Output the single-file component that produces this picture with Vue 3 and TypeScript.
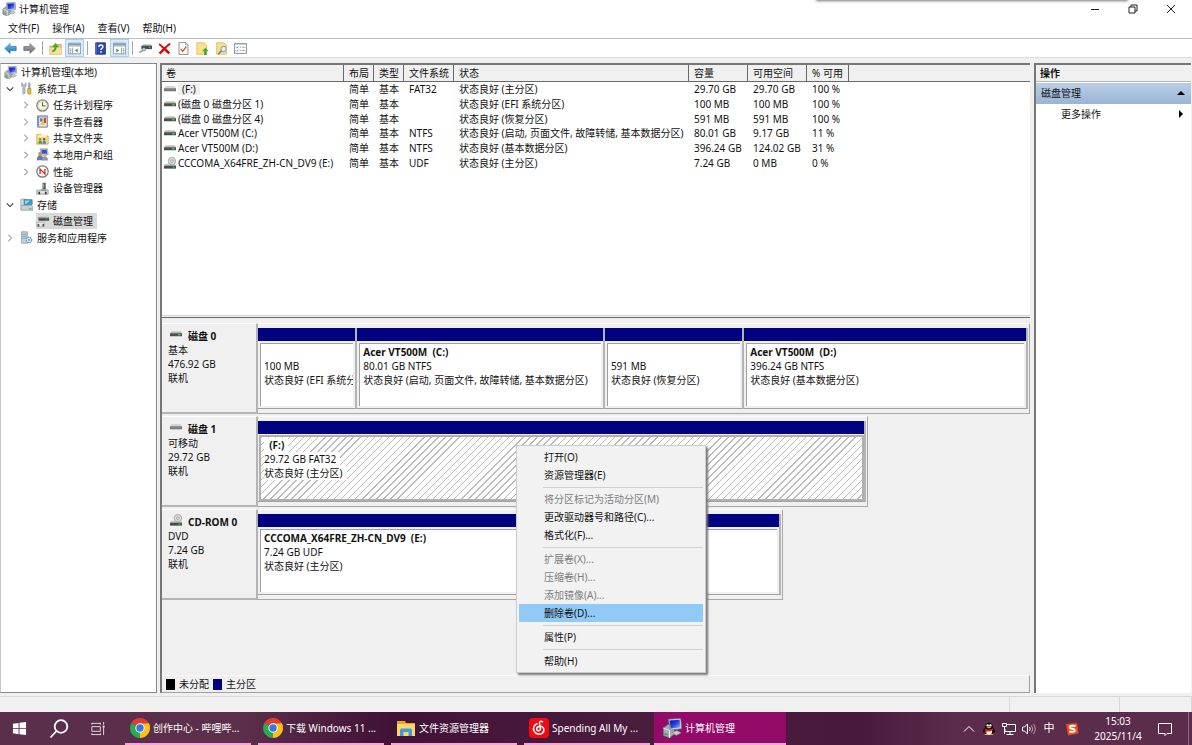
<script setup lang="ts">
import { ref } from 'vue'

interface TreeNode {
  label: string
  icon: string
  level: number
  state?: 'open' | 'closed'
  selected?: boolean
}
interface Volume {
  icon: string
  cells: string[]
  marked?: boolean
}
interface Partition {
  title: string
  size: string
  status: string
  share: number
  selected?: boolean
}
interface Disk {
  name: string
  icon: string
  kind: string
  size: string
  state: string
  width: number
  parts: Partition[]
}
interface MenuEntry {
  label: string
  disabled?: boolean
  rule?: boolean
}

const menus = ['文件(F)', '操作(A)', '查看(V)', '帮助(H)']

const tools: { icon: string; name: string; on?: boolean }[][] = [
  [{ icon: 'back', name: '后退' }, { icon: 'forward', name: '前进' }],
  [{ icon: 'up', name: '向上一级' }, { icon: 'panel-left', name: '显示/隐藏控制台树', on: true }],
  [{ icon: 'help', name: '帮助' }, { icon: 'panel-right', name: '显示/隐藏操作窗格', on: true }],
  [
    { icon: 'refresh-disk', name: '刷新' },
    { icon: 'delete', name: '删除' },
    { icon: 'check', name: '属性' },
    { icon: 'page-up', name: '打开' },
    { icon: 'page-find', name: '浏览' },
    { icon: 'options', name: '设置' },
  ],
]

const tree: TreeNode[] = [
  { label: '计算机管理(本地)', icon: 'computer', level: 0 },
  { label: '系统工具', icon: 'tools', level: 1, state: 'open' },
  { label: '任务计划程序', icon: 'clock', level: 2, state: 'closed' },
  { label: '事件查看器', icon: 'events', level: 2, state: 'closed' },
  { label: '共享文件夹', icon: 'shared', level: 2, state: 'closed' },
  { label: '本地用户和组', icon: 'users', level: 2, state: 'closed' },
  { label: '性能', icon: 'perf', level: 2, state: 'closed' },
  { label: '设备管理器', icon: 'device', level: 2 },
  { label: '存储', icon: 'storage', level: 1, state: 'open' },
  { label: '磁盘管理', icon: 'diskmgmt', level: 2, selected: true },
  { label: '服务和应用程序', icon: 'services', level: 1, state: 'closed' },
]

const columns = ['卷', '布局', '类型', '文件系统', '状态', '容量', '可用空间', '% 可用']

const volumes: Volume[] = [
  { icon: 'drive-gray', marked: true, cells: ['(F:)', '简单', '基本', 'FAT32', '状态良好 (主分区)', '29.70 GB', '29.70 GB', '100 %'] },
  { icon: 'drive', cells: ['(磁盘 0 磁盘分区 1)', '简单', '基本', '', '状态良好 (EFI 系统分区)', '100 MB', '100 MB', '100 %'] },
  { icon: 'drive', cells: ['(磁盘 0 磁盘分区 4)', '简单', '基本', '', '状态良好 (恢复分区)', '591 MB', '591 MB', '100 %'] },
  { icon: 'drive', cells: ['Acer VT500M (C:)', '简单', '基本', 'NTFS', '状态良好 (启动, 页面文件, 故障转储, 基本数据分区)', '80.01 GB', '9.17 GB', '11 %'] },
  { icon: 'drive', cells: ['Acer VT500M (D:)', '简单', '基本', 'NTFS', '状态良好 (基本数据分区)', '396.24 GB', '124.02 GB', '31 %'] },
  { icon: 'cdrom', cells: ['CCCOMA_X64FRE_ZH-CN_DV9 (E:)', '简单', '基本', 'UDF', '状态良好 (主分区)', '7.24 GB', '0 MB', '0 %'] },
]

const disks: Disk[] = [
  {
    name: '磁盘 0', icon: 'drive', kind: '基本', size: '476.92 GB', state: '联机', width: 100,
    parts: [
      { title: '', size: '100 MB', status: '状态良好 (EFI 系统分区)', share: 99 },
      { title: 'Acer VT500M  (C:)', size: '80.01 GB NTFS', status: '状态良好 (启动, 页面文件, 故障转储, 基本数据分区)', share: 247 },
      { title: '', size: '591 MB', status: '状态良好 (恢复分区)', share: 139 },
      { title: 'Acer VT500M  (D:)', size: '396.24 GB NTFS', status: '状态良好 (基本数据分区)', share: 283 },
    ],
  },
  {
    name: '磁盘 1', icon: 'drive-gray', kind: '可移动', size: '29.72 GB', state: '联机', width: 79,
    parts: [{ title: '  (F:)', size: '29.72 GB FAT32', status: '状态良好 (主分区)', share: 1, selected: true }],
  },
  {
    name: 'CD-ROM 0', icon: 'cdrom', kind: 'DVD', size: '7.24 GB', state: '联机', width: 68,
    parts: [{ title: 'CCCOMA_X64FRE_ZH-CN_DV9  (E:)', size: '7.24 GB UDF', status: '状态良好 (主分区)', share: 1 }],
  },
]

const contextMenu: MenuEntry[] = [
  { label: '打开(O)' },
  { label: '资源管理器(E)' },
  { label: '将分区标记为活动分区(M)', disabled: true, rule: true },
  { label: '更改驱动器号和路径(C)...' },
  { label: '格式化(F)...' },
  { label: '扩展卷(X)...', disabled: true, rule: true },
  { label: '压缩卷(H)...', disabled: true },
  { label: '添加镜像(A)...', disabled: true },
  { label: '删除卷(D)...' },
  { label: '属性(P)', rule: true },
  { label: '帮助(H)', rule: true },
]
const hovered = ref('删除卷(D)...')

const tasks = [
  { label: '创作中心 - 哔哩哔...', icon: 'chrome' },
  { label: '下载 Windows 11 ...', icon: 'chrome' },
  { label: '文件资源管理器', icon: 'explorer' },
  { label: 'Spending All My ...', icon: 'music' },
  { label: '计算机管理', icon: 'computer', active: true },
]
</script>

<template>
  <svg class="defs" width="0" height="0" aria-hidden="true">
    <defs>
      <linearGradient id="g-blue" x1="0" y1="0" x2="0" y2="1"><stop offset="0" stop-color="#6cc5f0" /><stop offset="1" stop-color="#1176bd" /></linearGradient>
      <linearGradient id="g-gray" x1="0" y1="0" x2="0" y2="1"><stop offset="0" stop-color="#b0b0b0" /><stop offset="1" stop-color="#6b6b6b" /></linearGradient>
      <linearGradient id="g-screen" x1="0" y1="0" x2="1" y2="1"><stop offset="0" stop-color="#0715a8" /><stop offset=".5" stop-color="#2340e0" /><stop offset="1" stop-color="#a8c4ff" /></linearGradient>
      <linearGradient id="g-drive" x1="0" y1="0" x2="0" y2="1"><stop offset="0" stop-color="#e2e2e2" /><stop offset="1" stop-color="#a2a2a2" /></linearGradient>
    </defs>
    <symbol id="computer" viewBox="0 0 16 16">
      <path d="M1 8 5 5l5 2v6l-4 3-5-2z" fill="#a4aab0" stroke="#5d6268" stroke-width=".6" />
      <path d="M1 8l5 2v6M6 10l4-3" fill="none" stroke="#e8e8e8" stroke-width=".8" />
      <path d="M5 1l10-.6 .8 8.200-9 1z" fill="#d5dbe2" stroke="#6d737c" stroke-width=".6" />
      <path d="M6 1.900l8-.5.8 6.200-7.800.8z" fill="url(#g-screen)" />
      <path d="M8 11.500l4-1.500 3.400 1.800-4 2.200z" fill="#c9cdd2" stroke="#777" stroke-width=".5" />
      <path d="M2 12.500l2.500 1" stroke="#39a23d" />
    </symbol>
    <symbol id="back" viewBox="0 0 16 16"><path d="M1 8l6.500-6v3.500H15v5H7.500V14z" fill="url(#g-blue)" stroke="#1d6fa9" stroke-width=".8" /></symbol>
    <symbol id="forward" viewBox="0 0 16 16"><path d="M15 8L8.500 2v3.500H1v5h7.500V14z" fill="url(#g-gray)" stroke="#666" stroke-width=".8" /></symbol>
    <symbol id="up" viewBox="0 0 16 16">
      <path d="M1 5h5l1-2h8v12H1z" fill="#eac66a" stroke="#b48d32" stroke-width=".7" /><path d="M1 7h14v8H1z" fill="#f8df95" />
      <path d="M4 12c3 0 5-2 5-6h2.500L8 1.500 4.500 6H7c0 3-1 4-3 4.500z" fill="#42b52d" stroke="#2c871d" stroke-width=".5" />
    </symbol>
    <symbol id="panel-left" viewBox="0 0 16 16">
      <path d="M.5 1.500h15v13H.5z" fill="#fff" stroke="#7d8790" /><path d="M1 2h14v2.500H1z" fill="#8e9aa5" /><path d="M1 5h14v1H1z" fill="#c7ced4" />
      <path d="M5.500 7v8" stroke="#8e9aa5" /><path d="M2 8.500h2M2 10.500h2M2 12.500h2" stroke="#6c7882" /><path d="M12 8v5l-3.500-2.500z" fill="#32a532" />
    </symbol>
    <symbol id="panel-right" viewBox="0 0 16 16">
      <path d="M.5 1.500h15v13H.5z" fill="#fff" stroke="#7d8790" /><path d="M1 2h14v2.500H1z" fill="#8e9aa5" /><path d="M1 5h14v1H1z" fill="#c7ced4" />
      <path d="M10.500 7v8" stroke="#8e9aa5" /><path d="M12 8.500h2M12 10.500h2M12 12.500h2" stroke="#6c7882" /><path d="M4 8v5l3.500-2.500z" fill="#32a532" />
    </symbol>
    <symbol id="help" viewBox="0 0 16 16">
      <path d="M2 1h12v14H2z" fill="#2c49b5" stroke="#15266d" /><path d="M2.500 1v14" stroke="#8090d4" />
      <path d="M6 6c0-3 5-3 5-.3 0 1.800-2.500 2-2.500 4" fill="none" stroke="#fff" stroke-width="1.700" /><circle cx="8.500" cy="12.200" r="1.100" fill="#fff" />
    </symbol>
    <symbol id="refresh-disk" viewBox="0 0 16 16">
      <path d="M3 5l2-2h10l1 2v4H3z" fill="#97a3a2" /><path d="M3 5h13v3.500H3z" fill="#3f4b49" /><path d="M12 6.500h2" stroke="#3ee27a" stroke-width="1.300" />
      <path d="M0 13l5-3" stroke="#999" stroke-width="1.800" /><circle cx="6" cy="9" r="2" fill="#bfe0ea" stroke="#6b7c82" />
    </symbol>
    <symbol id="delete" viewBox="0 0 16 16"><path d="M2 1.500Q6 5 8 6.500 11 3 14.500 1L15.500 3Q12 5.500 10 8q3 3 5 5l-2 2q-3-2-5-4.500Q5.500 13 3 15.300L.8 13Q4 10.500 5.800 8 3 5.500.8 3.500z" fill="#d40d0d" /></symbol>
    <symbol id="check" viewBox="0 0 16 16"><path d="M2.500.5h8l3 3v12h-11z" fill="#fff" stroke="#777" /><path d="M10.500.5v3h3" fill="none" stroke="#999" /><path d="M4.500 8.500l2.500 3 4.500-6" fill="none" stroke="#e2582f" stroke-width="1.700" /></symbol>
    <symbol id="page-up" viewBox="0 0 16 16"><path d="M1 1h9l3 3v11H1z" fill="#fbe08a" stroke="#d6ac43" stroke-width=".8" /><path d="M10 16v-4.500H7.500L11.500 7l4 4.500H13V16z" fill="#39ad2d" /></symbol>
    <symbol id="page-find" viewBox="0 0 16 16"><path d="M2 1h9l3 3v11H2z" fill="#fbe08a" stroke="#d6ac43" stroke-width=".8" /><path d="M4 15l4-4" stroke="#7b858c" stroke-width="2" /><circle cx="10.500" cy="8.500" r="3.300" fill="#dcf0fa" stroke="#8299a8" stroke-width="1.200" /></symbol>
    <symbol id="options" viewBox="0 0 16 16"><path d="M.5 2h15v12H.5z" fill="#fff" stroke="#6e7881" /><path d="M1 2.500h14" stroke="#9ba6b0" /><path d="M2.500 6.500l1 1 2-2M2.500 10.500l1 1 2-2" fill="none" stroke="#2e75b5" /><path d="M7 6.500h2m1 0h4M7 10.500h2m1 0h4" stroke="#8b959e" /></symbol>
    <symbol id="tools" viewBox="0 0 16 16">
      <path d="M2 1v4l1.500 1.500V14q1 2 2.500 0V6.500L7.500 5V1L6 2.500v2H3.800v-2z" fill="#c4cbd1" stroke="#747d84" stroke-width=".7" />
      <path d="M10.500 1h2v7h-2z" fill="#a9b0b6" stroke="#747d84" stroke-width=".5" /><path d="M9.500 8h4v6q-2 2.500-4 0z" fill="#f0b932" stroke="#a87711" stroke-width=".7" />
    </symbol>
    <symbol id="clock" viewBox="0 0 16 16"><circle cx="8" cy="8" r="7" fill="#f4f1e6" stroke="#85888c" stroke-width="1.600" /><circle cx="8" cy="8" r="5.200" fill="#fff8df" stroke="#d4c59d" stroke-width=".8" /><path d="M8 4v4.500h3.500" fill="none" stroke="#4a4f56" stroke-width="1.200" /></symbol>
    <symbol id="events" viewBox="0 0 16 16"><path d="M2 1h12v14H2z" fill="#aab6c8" stroke="#5b6880" stroke-width=".8" /><path d="M4 3h9v11H4z" fill="#f3e8ce" /><path d="M5 4h3v4H5z" fill="#4b75cd" /><path d="M9.500 3.500h2.800V10H9.500z" fill="#dc3d2d" /><path d="M5 12l3-4 3 4z" fill="#edba33" /><path d="M1.500 3h2m-2 3h2m-2 3h2m-2 3h2" stroke="#505d74" /></symbol>
    <symbol id="shared" viewBox="0 0 16 16"><path d="M1 3h5l1 2h8v10H1z" fill="#f5da84" stroke="#bb983e" stroke-width=".8" /><path d="M3 4h10v2H3z" fill="#fff5c7" /><circle cx="5" cy="9" r="1.500" fill="#b87b3c" /><circle cx="10" cy="9" r="1.500" fill="#8b5b2c" /><path d="M3 14.500q0-4 2-4t2.500 4z" fill="#3c9d54" /><path d="M8 14.500q0-4 2-4t2.500 4z" fill="#4784ce" /></symbol>
    <symbol id="users" viewBox="0 0 16 16"><path d="M5 1h9l1 7-8 1z" fill="#cfdbed" stroke="#6a7896" stroke-width=".7" /><path d="M6.500 2h6.500l.7 5H7.500z" fill="#3152c8" /><circle cx="5" cy="7" r="2.300" fill="#c69157" /><path d="M1 15q0-6 4-6t4 6z" fill="#5f7eae" /><circle cx="11" cy="9" r="2" fill="#e1b684" /><path d="M7.500 15.500q0-5 3.500-5t4 5z" fill="#8e98a8" /></symbol>
    <symbol id="perf" viewBox="0 0 16 16"><circle cx="8" cy="8" r="7" fill="#fff" stroke="#797979" stroke-width="1.500" /><path d="M5 11V5l6 6V5" fill="none" stroke="#d12a1c" stroke-width="1.600" /></symbol>
    <symbol id="device" viewBox="0 0 16 16"><path d="M8 1h4v8H8z" fill="#565e61" /><path d="M9 2h1v5H9z" fill="#96d2a0" /><path d="M1 10h14v5H1z" fill="#dedede" stroke="#6d6d6d" stroke-width=".7" /><path d="M3 12h2v3H3zM11 12h2v3h-2z" fill="#383838" /><path d="M6 9h7v2H6z" fill="#8d9698" /></symbol>
    <symbol id="storage" viewBox="0 0 16 16"><path d="M1 2l3-1 4 1v8H1z" fill="#d5dadd" stroke="#80898d" stroke-width=".7" /><path d="M5 2h10v6H5z" fill="#27a6d9" stroke="#45606d" stroke-width=".7" /><path d="M6 3h6L8 7H6z" fill="#7ddbf7" /><path d="M1 11l2-2h11l2 2v4H1z" fill="#c9cfd3" stroke="#747d83" stroke-width=".7" /><path d="M11 13.200h3" stroke="#3bbd43" stroke-width="1.200" /></symbol>
    <symbol id="diskmgmt" viewBox="0 0 16 16"><path d="M3 3h13v4H3z" fill="#424947" /><path d="M4 2h11l1 2H3z" fill="#a0a6a4" /><path d="M12 5h2" stroke="#36d36c" /><path d="M1 9h9v5H1z" fill="#ececec" stroke="#888" stroke-width=".6" /><path d="M2 11h2v3H2zM8 11h2v3H8z" fill="#4c4c4c" /></symbol>
    <symbol id="services" viewBox="0 0 16 16"><path d="M2 1h7v14H2z" fill="#c8d6df" stroke="#6b7e8c" stroke-width=".8" /><path d="M3 4h5M3 6.500h5M3 9h5" stroke="#6e8fa4" /><circle cx="11" cy="11" r="3.300" fill="#e7f2fa" stroke="#6c9cc1" stroke-width="1.700" stroke-dasharray="2 .7" /><circle cx="11" cy="11" r="1.200" fill="#6c9cc1" /></symbol>
    <symbol id="drive" viewBox="0 0 16 16"><path d="M2 4h12l2 3H0z" fill="url(#g-drive)" /><path d="M0 7h16v4H0z" fill="#4b4f4d" /><path d="M11 9h3" stroke="#35e05a" stroke-width="1.800" /></symbol>
    <symbol id="drive-gray" viewBox="0 0 16 16"><path d="M2 4h12l2 3H0z" fill="#d5d5d5" /><path d="M0 7h16v4H0z" fill="#707070" /><path d="M1 9h14" stroke="#989898" /></symbol>
    <symbol id="cdrom" viewBox="0 0 16 16"><path d="M2 9h12l2 2.500H0z" fill="#c9c9c9" /><path d="M0 11.500h16v4H0z" fill="#484c4a" /><path d="M11.500 13.500h2.500" stroke="#35e05a" stroke-width="1.300" /><circle cx="10.500" cy="5.500" r="5" fill="#dadada" stroke="#999" /><circle cx="10.500" cy="5.500" r="1.700" fill="#fff" stroke="#888" /></symbol>
    <symbol id="chrome" viewBox="0 0 20 20">
      <path d="M10 10L1.340 5A10 10 0 0 1 18.660 5z" fill="#e33b2e" /><path d="M10 10L18.660 5A10 10 0 0 1 10 20z" fill="#fbc116" /><path d="M10 10L10 20A10 10 0 0 1 1.340 5z" fill="#2da94f" />
      <path d="M10 5.400h8.900q.7 1.500.9 3L14 12z" fill="#fbc116" /><circle cx="10" cy="10" r="4.700" fill="#fff" /><circle cx="10" cy="10" r="3.700" fill="#3079e8" />
    </symbol>
    <symbol id="explorer" viewBox="0 0 20 20"><path d="M1 3h8l1 2h9v13H1z" fill="#e5a823" /><path d="M1 6h18v12H1z" fill="#ffd66e" /><path d="M4 18v-6q0-1.500 1.500-1.500h9Q16 10.500 16 12v6h-3.500v-4h-5v4z" fill="#3e9ed5" /></symbol>
    <symbol id="music" viewBox="0 0 20 20"><rect width="20" height="20" rx="4" fill="#f00b12" /><path d="M13.500 3.700Q10.700 2.400 10.500 5l.9 5.500c.3 3.200-3.900 3-3.700.3C7.900 8.200 12.600 7 14.400 10c1.900 4-2 6.600-5 6.100-4.400-.7-6-4.900-4.200-8.100Q6.300 6.300 8 5.700" fill="none" stroke="#fff" stroke-width="1.500" stroke-linecap="round" /></symbol>
  </svg>

  <div class="screen">
    <header class="titlebar">
      <svg class="app-icon"><use href="#computer" /></svg>
      <span class="grow">计算机管理</span>
      <button class="win-btn" aria-label="最小化"><svg viewBox="0 0 10 10"><path d="M1 5.500h8" /></svg></button>
      <button class="win-btn" aria-label="还原"><svg viewBox="0 0 10 10"><path d="M1 3h6v6H1zM3 3V1h6v6H7" /></svg></button>
      <button class="win-btn" aria-label="关闭"><svg viewBox="0 0 10 10"><path d="M1 1l8 8M9 1L1 9" /></svg></button>
      <i class="edge-shadow"></i>
    </header>

    <nav class="menubar">
      <button v-for="m in menus" :key="m">{{ m }}</button>
    </nav>

    <div class="toolbar" role="toolbar">
      <div v-for="(group, gi) in tools" :key="gi" class="tool-group">
        <button v-for="t in group" :key="t.icon" :class="{ on: t.on }" :aria-label="t.name">
          <svg><use :href="'#' + t.icon" /></svg>
        </button>
      </div>
    </div>

    <main class="workspace">
      <aside class="pane tree-pane">
        <ul class="tree" role="tree">
          <li v-for="n in tree" :key="n.label" role="treeitem" :class="['level-' + n.level]">
            <span v-if="n.level" class="twist">
              <svg v-if="n.state === 'closed'" viewBox="0 0 10 10"><path d="M3 1l4 4-4 4" stroke="#9a9a9a" /></svg>
              <svg v-else-if="n.state === 'open'" viewBox="0 0 10 10"><path d="M1 3l4 4 4-4" stroke="#333" /></svg>
            </span>
            <span class="node" :class="{ selected: n.selected }">
              <svg class="node-icon"><use :href="'#' + n.icon" /></svg>{{ n.label }}
            </span>
          </li>
        </ul>
      </aside>

      <section class="pane center">
        <div class="volume-list">
          <table>
            <colgroup>
              <col class="c-vol" /><col class="c-s" /><col class="c-s" /><col class="c-fs" /><col class="c-state" />
              <col class="c-size" /><col class="c-size" /><col class="c-pct" /><col />
            </colgroup>
            <thead>
              <tr><th v-for="c in columns" :key="c" scope="col">{{ c }}</th><td></td></tr>
            </thead>
            <tbody>
              <tr v-for="v in volumes" :key="v.cells[0]">
                <td v-for="(c, i) in v.cells" :key="i">
                  <span v-if="i === 0" class="vol"><svg><use :href="'#' + v.icon" /></svg><span :class="{ marked: v.marked }">{{ c }}</span></span>
                  <template v-else>{{ c }}</template>
                </td>
                <td></td>
              </tr>
            </tbody>
          </table>
        </div>
        <div class="splitter"></div>
        <div class="disk-view">
          <div class="disks">
            <article v-for="d in disks" :key="d.name" class="disk">
              <div class="disk-label">
                <h3><svg><use :href="'#' + d.icon" /></svg>{{ d.name }}</h3>
                <p>{{ d.kind }}</p>
                <p>{{ d.size }}</p>
                <p>{{ d.state }}</p>
              </div>
              <div class="track">
                <div
                  class="parts"
                  :style="{ width: d.width + '%', gridTemplateColumns: d.parts.map((p) => `minmax(0, ${p.share}fr)`).join(' ') }"
                >
                  <div v-for="p in d.parts" :key="p.status" class="part" :class="{ selected: p.selected }">
                    <div class="cap"></div>
                    <div class="part-body">
                      <b><span>{{ p.title }}</span></b>
                      <p><span>{{ p.size }}</span></p>
                      <p><span>{{ p.status }}</span></p>
                    </div>
                  </div>
                </div>
              </div>
            </article>
          </div>
          <div class="legend">
            <i class="black"></i><span>未分配</span><i class="navy"></i><span>主分区</span>
          </div>
          <ul class="context" role="menu">
            <li v-for="e in contextMenu" :key="e.label" :class="{ rule: e.rule }" role="none">
              <button role="menuitem" :disabled="e.disabled" :class="{ hot: hovered === e.label }" @mouseenter="hovered = e.label">{{ e.label }}</button>
            </li>
          </ul>
        </div>
      </section>

      <aside class="pane actions">
        <h2>操作</h2>
        <button class="section">磁盘管理<svg viewBox="0 0 8 8"><path d="M0 6l4-4 4 4z" /></svg></button>
        <button class="more">更多操作<svg viewBox="0 0 8 8"><path d="M2 0l4 4-4 4z" /></svg></button>
      </aside>
    </main>

    <div class="statusbar"><span></span><span></span><span></span></div>

    <footer class="taskbar">
      <button class="sys" aria-label="开始"><svg viewBox="0 0 16 16" fill="#fff"><path d="M1 3l6-1v5.600H1zM8 1.900L15 1v6.600H8zM1 8.400h6V14l-6-1zM8 8.400h7V15l-7-1z" /></svg></button>
      <button class="sys search" aria-label="搜索"><svg viewBox="0 0 20 20" fill="none" stroke="#fff" stroke-width="1.800"><circle cx="12" cy="7.500" r="6.300" /><path d="M7.500 12L1.500 18.500" /></svg></button>
      <button class="sys" aria-label="任务视图"><svg viewBox="0 0 16 16" fill="none" stroke="#e8dfe5"><path d="M2 4V2m0 .500h9V2v2M2 6h9v5H2zM2 13v2m0-.5h9V15v-2M14.500 1v3m0 3v8" /><path d="M13.500 5h2v2h-2z" fill="#fff" stroke="none" /></svg></button>
      <div class="tasks">
        <button v-for="t in tasks" :key="t.label" :class="{ active: t.active }">
          <svg><use :href="'#' + t.icon" /></svg><span>{{ t.label }}</span>
        </button>
      </div>
      <div class="tray">
        <button aria-label="显示隐藏的图标"><svg viewBox="0 0 14 14" fill="none" stroke="#fff"><path d="M2 9.500l5-5 5 5" /></svg></button>
        <button aria-label="QQ">
          <svg viewBox="0 0 14 14"><path d="M3 5.500C3-1 11-1 11 5.500c2 2.500 2.500 4 2 5-.6.600-1-.5-1.300-.8L11 12H3l-.7-2.300C2 10 1.400 11 1 10.500c-.6-1 0-2.500 2-5z" fill="#080808" /><path d="M4 8h6q.5 5-3 5T4 8z" fill="#fff" /><path d="M2.800 6.200Q7 9 11.200 6.200l.3 1.500Q7 10.500 4.500 9.200v2H3.200V8.500z" fill="#e51c23" /><circle cx="5.600" cy="3.400" r="1.200" fill="#fff" /><circle cx="8.400" cy="3.400" r="1.200" fill="#fff" /><path d="M4.500 5.300Q7 4 9.500 5.300 7 7 4.500 5.300zM2 13q2-2 4.800 0zm5.200 0Q10 11 12 13z" fill="#ffad14" /></svg>
        </button>
        <button aria-label="网络"><svg viewBox="0 0 14 14" fill="none" stroke="#fff"><path d="M5 2.500h8.500v7H3V7M8 10v2.500M4.500 12.500h7M.5 1.500h4v3h-4zM2.500 4.500V12" /></svg></button>
        <button aria-label="音量"><svg viewBox="0 0 14 14" fill="none" stroke="#fff"><path d="M.5 5h2l3-3v10l-3-3h-2zM7.500 5q1.500 2 0 4" /><path d="M9.500 3.500q2.500 3.500 0 7M11.500 2q3.500 5 0 10" stroke="#b99cad" /></svg></button>
        <button class="ime">中</button>
        <button class="sogou" aria-label="搜狗输入法"><svg viewBox="0 0 14 14"><path d="M1 2l11-1 1.500 10.500L3 13.500z" fill="#ee4c18" /><path d="M10.500 4Q5 3 4.800 5.200c0 2 5 1.200 5 3 0 2-3 2-5.600 1.200" fill="none" stroke="#fff" stroke-width="2" /></svg></button>
        <button class="time"><span>15:03</span><span>2025/11/4</span></button>
        <button class="notice" aria-label="通知"><svg viewBox="0 0 16 16" fill="none" stroke="#fff"><path d="M1.500 2.500h13v10H10L8 14.500V12.500H1.500z" /></svg></button>
      </div>
    </footer>
  </div>
</template>

<style>
html, body { margin: 0; overflow: hidden; }
</style>

<style scoped>
.defs { position: absolute; }
.screen {
  height: 100vh;
  display: flex;
  flex-direction: column;
  background: #f0f0f0;
  color: #111;
  font: 10px/14px "Noto Sans", "Noto Sans CJK SC", sans-serif;
  overflow: hidden;
}
* { box-sizing: border-box; }
button {
  font: inherit;
  color: inherit;
  background: none;
  border: 0;
  padding: 0;
  margin: 0;
  text-align: left;
  white-space: nowrap;
}
ul { list-style: none; margin: 0; padding: 0; }
h2, h3, p { margin: 0; font-size: 10px; }
svg { display: block; flex: none; }

.titlebar {
  position: relative;
  display: flex;
  align-items: center;
  height: 18px;
  padding: 0 2px 1px;
  background: #fff;
}
.app-icon { width: 14px; height: 14px; margin-right: 3px; }
.grow { flex: 1; }
.win-btn { width: 38px; display: flex; justify-content: center; }
.win-btn svg { width: 10px; height: 10px; fill: none; stroke: #222; }
.edge-shadow {
  position: absolute;
  top: -4px;
  right: 64px;
  width: 312px;
  height: 4px;
  box-shadow: 0 1px 3px #777;
}
.menubar { display: flex; gap: 13px; height: 20px; padding: 0 8px 1px; background: #fff; }
.toolbar {
  display: flex;
  height: 20px;
  padding: 0 1px;
  border-top: 1px solid #bcbcbc;
  border-bottom: 1px solid #dcdcdc;
  background: #fff;
}
.tool-group { display: flex; }
.tool-group + .tool-group { padding-left: 7px; background: linear-gradient(#a8a8a8, #a8a8a8) 3px 2px / 1px 14px no-repeat; }
.tool-group button { width: 19px; height: 18px; display: grid; place-items: center; border: 1px solid transparent; }
.tool-group button.on { background: #d5ebfb; border-color: #a3d2f2; }
.tool-group svg { width: 13px; height: 13px; }

.workspace {
  flex: 1;
  min-height: 0;
  display: grid;
  grid-template-columns: 157px minmax(0, 1fr) 156px;
  column-gap: 3px;
  padding: 5px 1px 0 0;
}
.pane { min-height: 0; }
.tree-pane { background: #fff; border: 1px solid #828790; border-left-color: #c8c8c8; }
.tree { height: 182px; display: grid; grid-auto-rows: 1fr; }
.tree li { display: flex; align-items: center; padding-left: 3px; white-space: nowrap; }
.tree li.level-2 { padding-left: 19px; }
.twist { width: 16px; }
.twist svg { width: 8px; height: 8px; margin-left: 2px; fill: none; stroke-width: 1.3; }
.node { display: flex; align-items: center; gap: 4px; height: 16px; padding-right: 4px; }
.node.selected { background: #d9d9d9; }
.node-icon { width: 13px; height: 13px; }

.center {
  display: flex;
  flex-direction: column;
  border-top: 2px solid #777;
  border-left: 2px solid #777;
  border-bottom: 1px solid #a0a0a0;
  margin-right: 2px;
}
.volume-list { flex: 250 0 0; min-height: 0; background: #fff; overflow: hidden; }
.splitter { height: 3px; border-top: 1px solid #d8d8d8; border-bottom: 1px solid #696969; }
table { width: 100%; height: 105px; table-layout: fixed; border-collapse: separate; border-spacing: 0; }
.c-vol { width: 182px; }
.c-s { width: 30px; }
.c-fs { width: 50px; }
.c-state { width: 235px; }
.c-size { width: 59px; }
.c-pct { width: 42px; }
thead th, thead td {
  height: 17px;
  padding: 0 0 0 5px;
  font-weight: 400;
  text-align: left;
  white-space: nowrap;
  background: #f0f0f0;
  border-bottom: 1px solid #696969;
}
thead th { border-right: 1px solid #696969; }
thead th:first-child { padding-left: 4px; }
tbody td { padding: 0 0 0 5px; white-space: nowrap; line-height: 12px; }
tbody td:first-child { padding-left: 2px; }
.vol { display: flex; align-items: center; gap: 2px; }
.vol svg { width: 12px; height: 12px; }
.marked { background: #f0f0f0; padding: 0 4px; }

.disk-view { position: relative; flex: 374 0 0; min-height: 0; display: flex; flex-direction: column; }
.disks { flex: 1; min-height: 0; padding: 5px 0 0; overflow: hidden; }
.disk { display: flex; height: 91px; margin-bottom: 2px; }
.disk-label {
  flex: none;
  width: 96px;
  padding: 5px 0 0 6px;
  border-top: 1px solid #fff;
  border-right: 2px solid #b4b4b4;
  border-bottom: 2px solid #b4b4b4;
}
.disk-label h3 { display: flex; align-items: center; gap: 6px; height: 14px; }
.disk-label h3 svg { width: 12px; height: 12px; margin: -4px 0 0 2px; }
.track { flex: 1; min-width: 0; }
.parts {
  display: grid;
  height: 91px;
  padding: 4px 1px 4px 0;
  border-top: 1px solid #fff;
  border-right: 1px solid #a8a8a8;
  border-bottom: 1px solid #a8a8a8;
}
.part { display: flex; flex-direction: column; border-right: 2px solid #b4b4b4; border-bottom: 1px solid #a0a0a0; }
.cap { height: 13px; background: #000080; }
.part-body {
  flex: 1;
  margin: 2px 2px 2px 2px;
  padding: 1px 0 0 3px;
  background: #fff;
  border-top: 1px solid #a0a0a0;
  border-left: 1px solid #a0a0a0;
  white-space: pre;
  overflow: hidden;
}
.part-body b { display: block; height: 14px; }
.selected .part-body {
  margin: 1px 0 0 1px;
  border: 2px solid #b0b0b0;
  background: repeating-linear-gradient(135deg, #bcbcbc 0 1px, #fff 1px 5px);
}
.selected .part-body span { display: inline-block; padding-right: 4px; background: #fff; }
.legend {
  display: flex;
  align-items: center;
  height: 17px;
  padding-left: 4px;
  gap: 4px;
  border-top: 1px solid #fafafa;
  border-right: 1px solid #a0a0a0;
}
.legend i { width: 9px; height: 11px; }
.black { background: #000; }
.navy { background: #000080; }

.context {
  position: absolute;
  left: 354px;
  top: 127px;
  width: 190px;
  padding: 2px 2px;
  border: 1px solid #ccc;
  background: #f2f2f2;
  box-shadow: 2px 2px 2px #777;
}
.context button { display: block; width: 100%; height: 18px; padding: 0 0 1px 25px; }
.context button:disabled { color: #7d7d7d; }
.context button.hot { background: #91c9f7; }
.context .rule {
  padding-top: 6px;
  background: linear-gradient(#d0d0d0, #d0d0d0) 24px 3px / 100% 1px no-repeat;
}

.actions { background: #fff; border-top: 2px solid #777; border-left: 2px solid #777; margin-left: -1px; }
.actions h2 { height: 17px; padding: 1px 4px; background: #f0f0f0; border-bottom: 1px solid #b8b8b8; }
.actions button { display: flex; width: 100%; align-items: center; justify-content: space-between; height: 20px; padding: 0 6px 1px 5px; }
.actions .section { height: 21px; background: linear-gradient(#b9cfe7, #9ab4d6); margin-top: 1px; }
.actions .more { padding-left: 25px; }
.actions svg { width: 8px; height: 8px; }

.statusbar { display: grid; grid-template-columns: 1fr 110px 72px; height: 19px; padding-top: 3px; }
.statusbar span { border-top: 1px solid #d9d9d9; border-right: 1px solid #d9d9d9; }

.taskbar {
  display: flex;
  height: 33px;
  color: #fff;
  background: linear-gradient(90deg, #592f4b 0, #5c2f4b 20%, #3f1236 33%, #45163a 40%, #4b1c3c 55%, #471a3c 72%, #5b2c4b 80%, #5b2c4b 100%);
}
.sys { width: 39px; display: grid; place-items: center; }
.sys svg { width: 15px; height: 15px; }
.sys.search svg { width: 20px; height: 20px; }
.tasks { display: flex; gap: 1px; margin-left: 5px; }
.tasks button {
  position: relative;
  display: flex;
  align-items: center;
  gap: 3px;
  width: 132px;
  padding: 0 0 1px 8px;
}
.tasks svg { width: 20px; height: 20px; }
.tasks button::after { content: ""; position: absolute; left: 3px; right: 3px; bottom: 0; height: 2px; background: #f6a6dc; }
.tasks button.active { background: #930a68; }
.tasks button.active::after { left: 0; right: 0; }
.tray { margin-left: auto; display: flex; align-items: center; padding-right: 2px; margin-right: 3px; border-right: 1px solid #8e6c80; }
.tray button { width: 20px; height: 33px; display: grid; place-items: center; }
.tray svg { width: 14px; height: 14px; }
.tray .ime { padding-bottom: 1px; font-size: 11px; }
.tray .sogou { width: 25px; }
.tray .time { display: flex; flex-direction: column; align-items: center; justify-content: center; width: 68px; height: 33px; line-height: 15px; }
.tray .notice { width: 26px; margin-right: 8px; }
.tray .notice svg { width: 16px; height: 16px; }
</style>
